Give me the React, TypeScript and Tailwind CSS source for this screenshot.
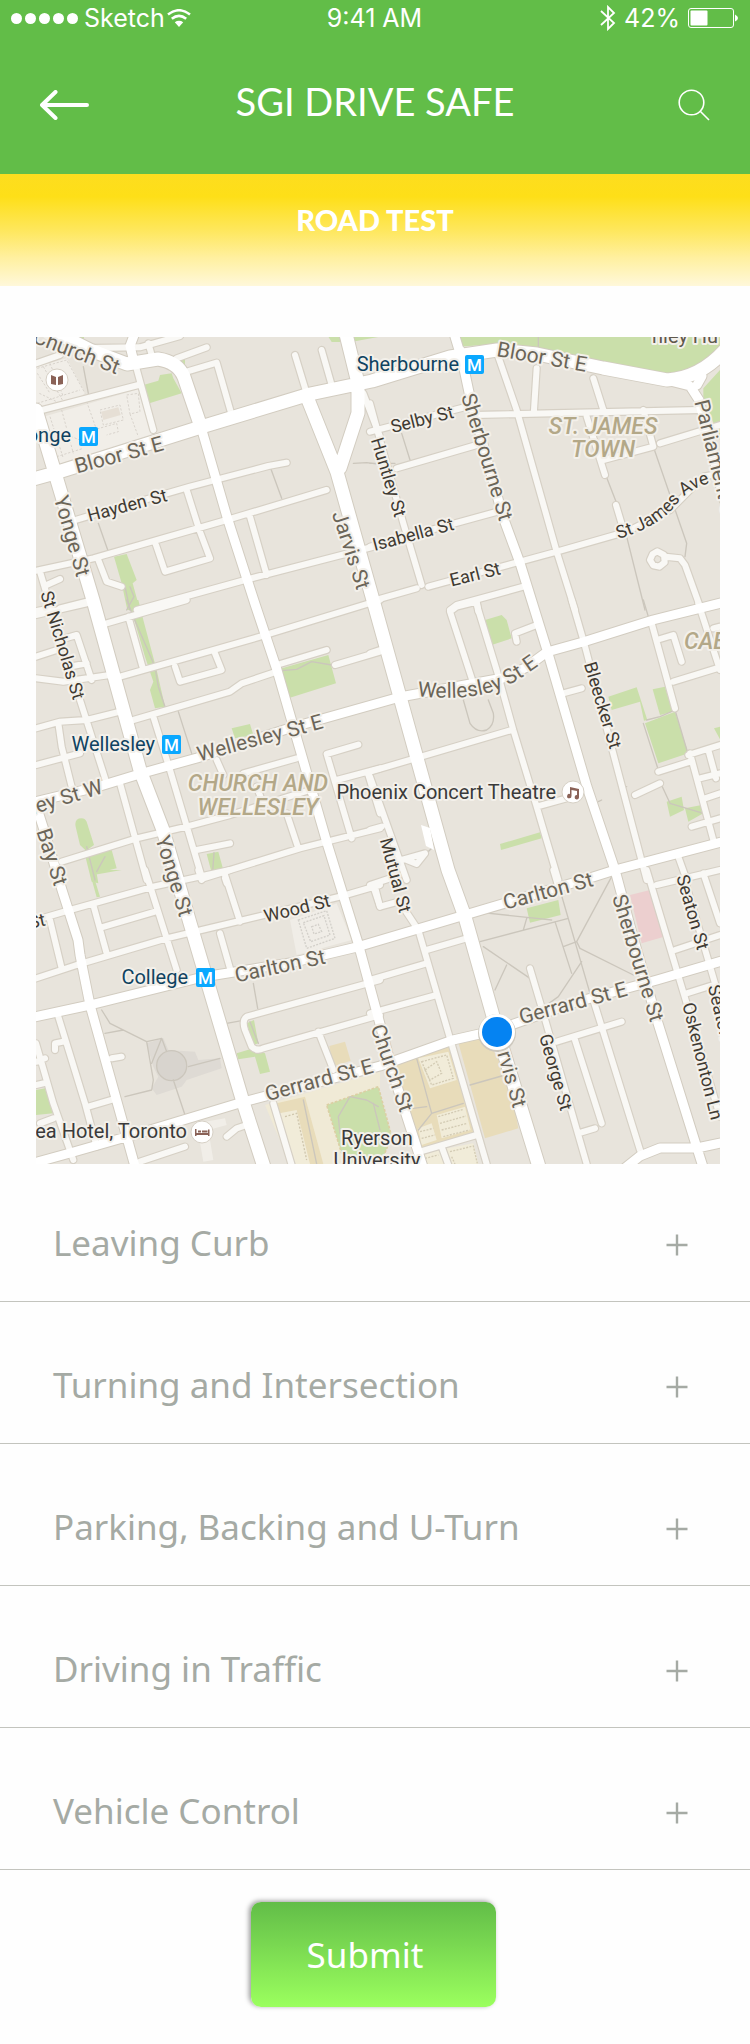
import React from "react";

type Tile = { x: number; y: number; streets: string; lanes: string; parks: string };

// Each tile is drawn at three units per map unit, from its own origin.
const TILES: Tile[] = [
  {
    x: 30,
    y: 330,
    streets:
      "M18 100L90 75M180 54L330 52L450 18M365 75L355 40M440 85L530 52M470 125L560 98L605 255M318 110L370 300M18 245L325 165M795 75L830 190M875 60L905 165M130 572L170 560L480 470L715 408L770 398M470 480L508 600L540 685L405 725L378 645M20 722L190 685L590 570L890 480M660 560L710 735M320 840L645 750L1050 645M1000 190L1050 320M205 690L230 755L275 770M30 725L70 860M50 765L90 747M90 835L170 815M10 845L60 835",
    lanes: "M205 580L235 665M722 415L755 505M970 400L1010 398L1050 403M160 110L175 190M285 770L300 840M300 770L312 800L290 840",
    parks:
      "M340 165L385 152L390 135L425 130L430 145L455 190L358 220ZM120 20H162V35ZM452 90L465 86L465 105ZM252 680L290 672L320 750L308 760L330 840L292 840L275 760ZM895 20H935L930 36H905ZM968 20H1050L975 34Z",
  },
  {
    x: 370,
    y: 330,
    streets:
      "M0 220L30 330L100 580L155 765M0 815L140 775M0 305L310 225M310 255L990 240M80 415L320 345M0 650L400 540M175 770L450 695L560 665L770 605L900 540L1000 440L1050 430M385 80L440 240L560 665L615 840M500 115L492 240M670 145L700 240M650 260L705 435M700 390L850 350L820 240M870 340L1050 285M738 525L762 605M886 680L930 685L945 705L990 830M862 664L882 675L884 697L868 710L850 706L840 690L848 672ZM240 840L260 825L460 770M320 820L325 845",
    lanes: "M95 310L120 390M705 430L740 520M770 620L825 840M850 350L950 640L945 680M505 20L505 60M0 400L75 400",
    parks:
      "M270 20H1050V70L960 130L880 130L640 90L400 40L270 50ZM1050 120L1000 175L1000 200L1050 330Z",
  },
  {
    x: 30,
    y: 600,
    streets:
      "M18 45L170 10M230 70L470 0M295 50L340 210M18 170L80 150M95 118L140 105L185 240M120 200L170 190M18 235L100 245L240 225M270 230L690 110L1050 0M435 200L450 245L575 210L555 160M18 385L90 365L170 360L270 335M310 360L600 275L635 250L740 215M85 370L95 440L125 560M18 495L150 460M150 300L230 550M740 195L890 150M915 195L1050 155M370 350L420 510L515 830M270 550L350 840M560 480L580 525M640 520L800 475M680 560L695 600M95 785L320 715L470 680L600 645L840 570M985 434L890 462L965 715M920 540L1050 505M500 750L600 730M520 835L810 745L1050 685M770 640L805 745M1015 525L1050 640M585 835L590 850",
    lanes: "M445 335L485 460M290 0L310 50L375 200L385 260L405 320M755 212L800 208L845 185L905 195M170 740L195 840M200 815L225 770M552 758L548 815",
    parks:
      "M290 0H325L340 60L380 210L405 320L375 325L360 270L370 245L345 170L310 50ZM745 208L895 165L918 250L775 295ZM605 385L660 372L670 405L615 415ZM137 680Q132 655 155 655Q165 655 170 665L192 735L168 752L150 735ZM165 765L245 750L260 805L200 820L205 850L185 845ZM530 762L565 755L580 810L545 818ZM18 32L40 25L18 40Z",
  },
  {
    x: 370,
    y: 600,
    streets:
      "M0 160L30 150M305 235L240 35L260 20L320 5M320 5L325 30L380 210L430 390L500 620L565 840M440 125L435 100L500 75M605 0L640 120L830 840M580 280L635 265M0 515L425 390M500 620L590 595M845 70L915 325M860 120L910 105L935 185M910 245L1040 205M985 10L1050 210M1030 85L1050 80M795 585L870 550M865 515L960 485M955 465L1050 435M960 460L1030 720M1015 450L1038 535M990 535L1050 520M1005 595L1050 580M965 680L1050 655M0 530L110 840M0 690L35 680M95 780L165 760L140 792L110 780M925 770L950 840",
    lanes: "M280 300L300 370Q320 400 350 390Q375 375 370 340L355 300M280 300L290 285M820 0L835 50M870 545L900 610L1000 640M915 330L955 465M750 565L770 560M685 605L695 600M830 360L870 350L915 330M820 370L865 510M170 760L185 745",
    parks:
      "M345 60L395 45L410 60L425 115L365 135ZM715 290L800 262L832 360L822 362L810 305L725 330ZM848 268L885 260L908 335L870 345ZM825 370L915 335L955 460L865 490ZM890 605L935 590L942 630L900 650ZM945 625L995 615L1000 640L955 665ZM390 732L510 697L515 715L393 750ZM1032 385L1050 380V418Z",
  },
  {
    x: 30,
    y: 870,
    streets:
      "M18 150L120 120L370 50L600 0M345 0L440 300M190 105L230 250M215 172L375 125M60 150L95 295M18 325L140 285L410 205L620 155L930 80L1050 45M585 15L630 155M570 190L600 295M505 0L515 30M1035 50L1050 110M85 440L165 700L200 830M75 540L75 520L100 515M18 520L70 700L130 870M20 575L45 565M18 645L40 640M245 565L275 560M175 710L260 685M30 760L70 745M1050 330L650 440Q635 450 645 480L665 530Q680 545 700 535L1050 435M865 485L910 600M650 765L620 775L590 800M330 875L465 830M730 700L785 885",
    lanes: "M215 420L240 460L350 515L395 505L410 545M225 490L280 480M350 515L370 630L365 660L285 680M395 505L365 580M430 630L465 735M475 590L570 565M670 340L683 415M590 460L635 452M660 455L685 520M470 587A45 45 0 1 0 380 587A45 45 0 1 0 470 587M820 690L860 882M930 790L925 740L960 680L1010 690L1045 710",
    parks:
      "M180 0H275L190 15L210 80L200 82L180 10ZM540 0L570 0L545 8ZM18 660L45 655L70 730L18 735ZM650 460L672 450L685 520L670 525ZM620 550L670 535L705 550L720 605L690 612L675 560L625 568Z",
  },
  {
    x: 370,
    y: 870,
    streets:
      "M0 45L60 25M10 50L30 110L85 95M105 120L145 180L350 882M170 240L290 205M0 330L170 280M0 430L200 375M480 295L520 430L650 882M550 0L565 50M670 390L810 840M560 515L755 455M615 510L695 760M625 790L675 775M830 0L950 400L1050 740M860 45L1050 0M915 240L1050 195M950 370L1030 345M950 50L1035 340M1000 10L1050 160M150 845L320 795M215 830L235 885",
    lanes: "M330 215L595 145M310 125L500 145L545 150M340 230L480 325M410 285L375 360M725 20L620 215L630 235L790 315M580 230L620 215M570 60L660 370M555 155L605 310M635 275L565 380L530 405M470 145L460 180M140 565L185 730L145 780M130 715L170 710M300 645L395 618M185 730L280 700M10 700L30 780",
    parks: "M470 115L565 90L572 135L480 158Z",
  },
];

const AVENUES =
  "M36 410L55 473L93 600L140 770L163 830L190 923L243 1102L265 1170M307 397L337 472L373 600L400 697L448 870L465 917L497 1030L540 1170M345 330L358 383L358 413L340 468M50 330L90 350L127 364L158 359Q178 362 184 377L201 427M30 480L55 473L201 427L310 394L372 381L450 357L497 350L537 354L603 368L667 380Q700 378 725 350";
const ROADS =
  "M201 427L227 517L255 604L277 670L327 843L358 943L377 1013L395 1080L424 1170M460 350L470 397L503 517L520 563L547 650L587 787L615 870L633 937L657 1020L697 1148L704 1170M453 330L462 360M30 803L97 787L143 773L197 758L290 728L400 697L503 678L525 668L547 652L583 642L653 620L725 602M30 1018L90 1005L203 977L290 963L357 947L465 915L593 877L615 870L725 841M30 1164L70 1153L140 1133L243 1102L380 1066L453 1040L497 1030L573 1003L657 980L725 960M36 805L44 830L62 890L78 940L80 955L90 1005L136 1170M620 1172L640 1156L660 1148L697 1148L725 1142M670 381L690 386L699 400L724 500M697 385L702 376M133 358L130 346L136 330";

type Street = { t: string; x: number; y: number; r: number; big?: boolean; a?: "start" | "end" };

const STREETS: Street[] = [
  { t: "Church St", x: 119, y: 368, r: 21, big: true, a: "end" },
  { t: "Bloor St E", x: 119, y: 455, r: -15, big: true },
  { t: "Hayden St", x: 127, y: 505, r: -15 },
  { t: "Yonge St", x: 72, y: 536, r: 74, big: true },
  { t: "St Nicholas St", x: 63, y: 645, r: 73 },
  { t: "Jarvis St", x: 351, y: 550, r: 72, big: true },
  { t: "Bloor St E", x: 542, y: 357, r: 10, big: true },
  { t: "Selby St", x: 422, y: 419, r: -14 },
  { t: "Huntley St", x: 389, y: 477, r: 73 },
  { t: "Sherbourne St", x: 487, y: 457, r: 73, big: true },
  { t: "Isabella St", x: 413, y: 534, r: -15 },
  { t: "Earl St", x: 475, y: 574, r: -14 },
  { t: "Parliament St", x: 701, y: 400, r: 76, big: true, a: "start" },
  { t: "Wellesley St E", x: 260, y: 738, r: -15, big: true },
  { t: "Wellesley St W", x: 102, y: 786, r: -17, big: true, a: "end" },
  { t: "Bay St", x: 52, y: 857, r: 72, big: true },
  { t: "Bleecker St", x: 603, y: 705, r: 73 },
  { t: "Mutual St", x: 396, y: 875, r: 75 },
  { t: "Carlton St", x: 548, y: 891, r: -15, big: true },
  { t: "Yonge St", x: 174, y: 876, r: 73, big: true },
  { t: "Wood St", x: 297, y: 908, r: -14 },
  { t: "Grosvenor St", x: 45, y: 919, r: -12, a: "end" },
  { t: "Carlton St", x: 280, y: 966, r: -12, big: true },
  { t: "Sherbourne St", x: 638, y: 958, r: 73, big: true },
  { t: "Seaton St", x: 693, y: 912, r: 74 },
  { t: "Seaton St", x: 714, y: 985, r: 76, a: "start" },
  { t: "Oskenonton Ln", x: 703, y: 1061, r: 76 },
  { t: "Gerrard St E", x: 573, y: 1003, r: -15, big: true },
  { t: "Gerrard St E", x: 319, y: 1080, r: -15, big: true },
  { t: "Church St", x: 392, y: 1068, r: 71, big: true },
  { t: "Jarvis St", x: 520, y: 1107, r: 74, big: true, a: "end" },
  { t: "George St", x: 556, y: 1072, r: 74 },
];

const HALO = "[paint-order:stroke] stroke-[#f3f0ea] stroke-[4px] [stroke-linejoin:round]";

function TileLayer({ render }: { render: (tile: Tile) => React.ReactNode }) {
  return (
    <>
      {TILES.map((tile) => (
        <g key={`${tile.x}-${tile.y}`} transform={`translate(${tile.x} ${tile.y}) scale(0.33333)`}>
          {render(tile)}
        </g>
      ))}
    </>
  );
}

function Metro({ x, y }: { x: number; y: number }) {
  return (
    <g>
      <rect x={x} y={y} width="19" height="19" rx="2" fill="#0aa8ff" />
      <text x={x + 9.5} y={y + 15.5} fontSize="17" fontWeight="500" textAnchor="middle" fill="#fff">
        M
      </text>
    </g>
  );
}

function CityMap() {
  return (
    <svg
      viewBox="36 337 684 827"
      role="img"
      aria-label="Map of downtown Toronto"
      className="block w-full font-['Roboto',sans-serif]"
    >
      <rect x="36" y="337" width="684" height="827" fill="#e8e4dc" />

      {/* campus, hospital and building grounds */}
      <g transform="translate(30 330) scale(0.33333)" fill="#f1eee8">
        <path d="M18 110L110 85L165 190L150 200L18 235Z" />
        <path d="M35 262L325 178L375 310L90 400L60 350Z" />
        <g fill="none" stroke="#d8d3cc" strokeWidth="3" strokeDasharray="7 5">
          <path d="M22 115L110 90L165 190M22 220L150 180M60 100L100 200M28 190L80 215M22 130L60 190M40 110L100 215" />
          <path d="M60 260L100 385M95 240L130 370M170 215L200 300M210 240L270 225L280 270L220 285ZM290 195L325 190L330 245L300 252ZM190 300L260 280L265 305L230 315M300 252L325 320M80 380L160 355M100 310L150 330" />
        </g>
        <path d="M213 245L265 232L272 255L220 270Z" fill="#e6dfd5" />
      </g>
      <g transform="translate(30 870) scale(0.33333)">
        <path d="M780 150L895 110L920 100L965 210L800 255Z" fill="#f0ede7" />
        <g fill="none" stroke="#d3d0ca" strokeWidth="4" strokeDasharray="6 4">
          <path d="M805 150L890 122L915 205L830 235ZM820 158L882 137L900 195L842 215ZM845 170L865 163L875 185L852 192Z" />
        </g>
        <path d="M350 520L400 505L415 540L495 545L505 570L570 565L575 595L470 630L455 650L380 675L365 655L385 620L370 590Z" fill="#dedad4" />
        <circle cx="425" cy="587" r="45" fill="#d8d4ce" />
        <path d="M500 760L585 745L590 765L535 780L550 870L520 875Z" fill="#f1eee8" />
        <path d="M705 705L1050 605V882H780Z" fill="#f0ead6" />
        <path d="M740 700L825 680L880 882H790Z" fill="#e8dcba" />
        <path d="M748 730L800 720L840 882H785Z" fill="#f1ecd9" />
        <path d="M765 740L800 730L830 870" fill="none" stroke="#cfc6ad" strokeWidth="4" strokeDasharray="6 5" />
        <path d="M898 528L945 515L962 572L908 590Z" fill="#e8dcba" />
        <path d="M890 705L1045 650L1085 800L1060 860L945 882Z" fill="#cadfaa" stroke="#dccfa4" strokeWidth="5" strokeDasharray="8 5" />
      </g>
      <g transform="translate(370 870) scale(0.33333)">
        <path d="M60 585L240 530L330 790L150 845Z" fill="#e8dcba" />
        <path d="M265 518L390 485L445 775L345 805Z" fill="#e8dcba" />
        <path d="M145 565L235 545L260 630L180 655Z" fill="#f1ecd9" />
        <path d="M200 735L285 710L302 780L215 805ZM145 775L185 760L200 810L155 825ZM160 850L310 820L325 882H160Z" fill="#f1ecd9" />
        <path
          d="M155 575L230 555L250 625L185 645ZM165 600L200 575L215 610L180 630ZM205 740L280 718M210 760L288 738M215 780L292 760M220 800L298 780M150 785L190 775M155 805L195 795M165 865L205 855M240 845L310 828L322 880M245 860L255 882"
          fill="none"
          stroke="#d3cbb4"
          strokeWidth="4"
          strokeDasharray="6 4"
        />
        <path d="M780 75L840 60L882 200L815 220Z" fill="#eccfcf" />
      </g>

      <TileLayer render={(t) => <path d={t.parks} fill="#cadfaa" />} />

      <g fill="none" strokeLinejoin="round" strokeLinecap="round">
        <TileLayer render={(t) => <path d={t.lanes} stroke="#cbc6bc" strokeWidth="4" />} />
        <TileLayer render={(t) => <path d={t.streets} stroke="#d6d0c5" strokeWidth="25" />} />
        <path d={ROADS} stroke="#d2ccc0" strokeWidth="11" />
        <path d={AVENUES} stroke="#d2ccc0" strokeWidth="15" />
        <TileLayer render={(t) => <path d={t.streets} stroke="#f9f8f5" strokeWidth="18" />} />
        <path d={ROADS} stroke="#ffffff" strokeWidth="9" />
        <path d={AVENUES} stroke="#ffffff" strokeWidth="13" />
      </g>
      <path d="M421 825L430 828L434 850L426 846Z" fill="#fff" />

      {/* street names */}
      <g className={HALO}>
        {STREETS.map((s) => (
          <text
            key={`${s.t}-${s.x}`}
            transform={`translate(${s.x} ${s.y}) rotate(${s.r})`}
            textAnchor={s.a ?? "middle"}
            dominantBaseline="central"
            fontSize={s.big ? 21 : 18}
            fill={s.big ? "#6b6558" : "#3f3a32"}
          >
            {s.t}
          </text>
        ))}
      </g>
      <defs>
        <path id="wellesley-curve" d="M417 696Q470 702 503 688Q530 674 556 652" />
        <path id="st-james-curve" d="M618 539Q658 527 675 506Q688 488 714 482" />
      </defs>
      <text fontSize="21" fill="#6b6558" className={HALO}>
        <textPath href="#wellesley-curve">Wellesley St E</textPath>
      </text>
      <text fontSize="18" fill="#3f3a32" className={HALO}>
        <textPath href="#st-james-curve">St James Ave</textPath>
      </text>
      <text x="652" y="343" fontSize="20" fill="#5f594d" className={HALO}>
        nley Hu
      </text>

      {/* neighbourhoods */}
      <g fontSize="23" fontWeight="500" fontStyle="italic" fill="#b3a888" textAnchor="middle" className={HALO}>
        <text x="603" y="434">ST. JAMES</text>
        <text x="603" y="457">TOWN</text>
        <text x="258" y="791">CHURCH AND</text>
        <text x="258" y="815">WELLESLEY</text>
        <text x="684" y="649" textAnchor="start">CABBAGETOWN</text>
      </g>

      {/* stations */}
      <g fontSize="20" fill="#0f4361" className={HALO}>
        <text x="71" y="442" textAnchor="end">Bloor-Yonge</text>
        <text x="459" y="371" textAnchor="end">Sherbourne</text>
        <text x="155" y="751" textAnchor="end">Wellesley</text>
        <text x="188" y="984" textAnchor="end">College</text>
      </g>
      <Metro x={79} y={427} />
      <Metro x={465} y={355} />
      <Metro x={162} y={735} />
      <Metro x={196} y={968} />

      {/* places */}
      <g fontSize="20" fill="#3a3a3a" className={HALO}>
        <text x="556" y="799" textAnchor="end">Phoenix Concert Theatre</text>
        <text x="187" y="1138" textAnchor="end">Chelsea Hotel, Toronto</text>
        <text x="377" y="1145" textAnchor="middle">Ryerson</text>
        <text x="377" y="1167" textAnchor="middle">University</text>
      </g>
      <g fill="#fff" stroke="#d6d0c5" strokeWidth="1">
        <circle cx="57" cy="380" r="11" />
        <circle cx="573" cy="792" r="11" />
        <circle cx="202" cy="1132" r="11" />
      </g>
      <g fill="#8a6257">
        <path d="M51 375L56 377V385L51 384ZM63 375L58 377V385L63 384Z" />
        <path d="M570 787L579 789V797.5A2.2 2.2 0 1 1 577 795V791L571.500 790V796A2.200 2.200 0 1 1 570 794Z" />
        <path d="M195 1129H196.500V1133H208V1129.500H209.500V1136H208V1135H196.500V1136H195ZM198 1130.500H201V1132.500H198ZM202 1130.500H207.500V1132.500H202Z" />
      </g>

      {/* current position */}
      <circle cx="497" cy="1033" r="19" fill="#cdc8be" />
      <circle cx="497" cy="1032" r="18" fill="#fff" />
      <circle cx="497" cy="1032" r="15" fill="#0583f2" />
    </svg>
  );
}

function StatusBar() {
  return (
    <div className="grid h-9 grid-cols-3 items-center pl-[11px] pr-3 text-[25px] leading-9 font-['Inter',sans-serif]">
      <div className="flex items-center">
        <div className="flex gap-[3px]">
          {[0, 1, 2, 3, 4].map((n) => (
            <span key={n} className="size-[11px] rounded-full bg-white" />
          ))}
        </div>
        <span className="ml-1.5">Sketch</span>
        <svg viewBox="0 0 24 18" className="ml-0.5 h-[18px] w-6" aria-hidden="true">
          <path d="M1 5.500Q12-3 23 5.500M4.800 9.800Q12 4 19.200 9.800" fill="none" stroke="#fff" strokeWidth="2.600" />
          <path d="M12 18L7.800 13.200Q12 10.400 16.200 13.200Z" fill="#fff" />
        </svg>
      </div>
      <time className="text-center">9:41 AM</time>
      <div className="flex items-center justify-end">
        <svg viewBox="0 0 16 26" className="h-[26px] w-4" aria-hidden="true">
          <path d="M1 6L14 18L8 24V2L14 8L1 20" fill="none" stroke="#fff" strokeWidth="1.800" />
        </svg>
        <span className="ml-2">42%</span>
        <svg viewBox="0 0 50 20" className="ml-2 h-5 w-[50px]" aria-hidden="true">
          <rect x="0.500" y="0.500" width="45" height="19" rx="2.500" fill="none" stroke="#fff" />
          <rect x="2.500" y="2.500" width="17" height="15" rx="1" fill="#fff" />
          <path d="M47 6.500Q50 8 50 10T47 13.500Z" fill="#fff" />
        </svg>
      </div>
    </div>
  );
}

const SECTIONS = [
  "Leaving Curb",
  "Turning and Intersection",
  "Parking, Backing and U-Turn",
  "Driving in Traffic",
  "Vehicle Control",
];

export default function App() {
  return (
    <div className="min-h-screen bg-[#fefefe] pb-9 font-['Noto_Sans',sans-serif]">
      <header className="bg-[#62bd48] text-white">
        <StatusBar />
        <div className="flex h-[138px] items-center justify-between px-10 pb-1">
          <button type="button" aria-label="Back" className="pt-1">
            <svg viewBox="0 0 50 30" className="h-[30px] w-[50px]" fill="none" stroke="#fff" strokeWidth="4" strokeLinecap="round" strokeLinejoin="round">
              <path d="M47 15H2M15.500 2L2 15L15.500 28" />
            </svg>
          </button>
          <h1 className="pb-1 text-[38px] leading-[52px] font-normal font-['Lato',sans-serif]">SGI DRIVE SAFE</h1>
          <button type="button" aria-label="Search" className="flex w-[50px] justify-end pt-1">
            <svg viewBox="0 0 32 32" className="size-8" fill="none" stroke="#fff" strokeWidth="1.600">
              <circle cx="13.500" cy="13.500" r="12.300" />
              <path d="M22 22L31 31" />
            </svg>
          </button>
        </div>
      </header>

      <div className="flex h-28 items-center justify-center bg-[linear-gradient(#fddd1f,#fedf18_20%,#fee75c_50%,#fff0a0_75%,#fff8da)] pb-5">
        <h2 className="text-[29px] leading-9 font-black text-white font-['Lato',sans-serif]">ROAD TEST</h2>
      </div>

      <main>
        <div className="pt-[51px] pr-[30px] pl-9">
          <CityMap />
        </div>

        <ul>
          {SECTIONS.map((name) => (
            <li key={name} className="group border-b border-[#c3c4be]">
              <button
                type="button"
                aria-expanded="false"
                className="flex w-full items-center justify-between pt-[59px] pr-[62px] pb-[34px] pl-[53px] text-left text-[35px] leading-[48px] text-[#a5aaa4] group-first:pt-[55px]"
              >
                {name}
                <svg viewBox="0 0 22 22" className="mt-1 size-[22px]" stroke="#a5aaa4" strokeWidth="2.400" aria-hidden="true">
                  <path d="M0.500 11H21.500M11 0.500V21.500" />
                </svg>
              </button>
            </li>
          ))}
        </ul>

        <div className="flex justify-center pt-8">
          <button
            type="submit"
            className="mr-1 h-[105px] w-[245px] rounded-[10px] bg-[linear-gradient(#62bd48,#9bff5e)] pr-4 text-[35px] leading-[48px] text-white shadow-[-2px_-1px_5px_rgba(0,0,0,0.4)]"
          >
            Submit
          </button>
        </div>
      </main>
    </div>
  );
}
